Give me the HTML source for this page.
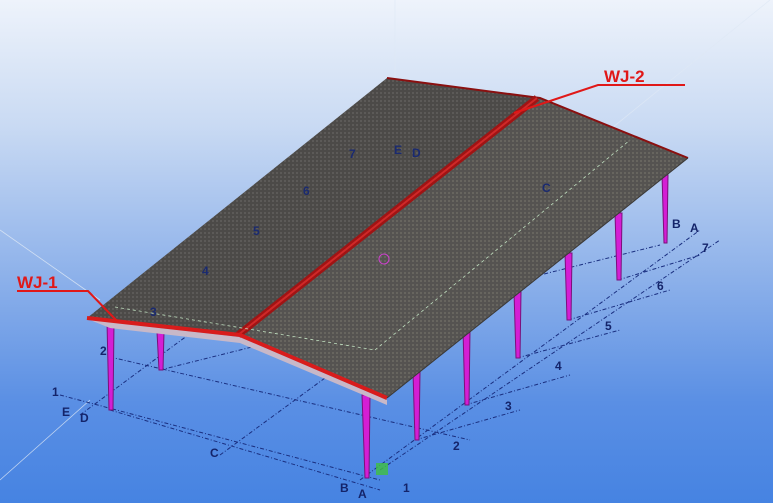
<!DOCTYPE html>
<html><head><style>
html,body{margin:0;padding:0;width:773px;height:503px;overflow:hidden}
body{background:linear-gradient(180deg,#eef3fb 0%,#c9daf3 25%,#8db1ea 55%,#5a8fe4 80%,#4683e2 100%)}
svg{position:absolute;left:0;top:0}
text{font-family:"Liberation Sans",sans-serif;font-weight:bold}
</style></head><body>
<svg width="773" height="503" viewBox="0 0 773 503">
<defs>
<pattern id="t" width="4" height="4" patternUnits="userSpaceOnUse">
<rect width="4" height="4" fill="#4c4a48"/><rect width="2" height="2" fill="#5c5a58"/></pattern>
<pattern id="t2" width="4" height="4" patternUnits="userSpaceOnUse">
<rect width="4" height="4" fill="#555351"/><rect width="2" height="2" fill="#67655f"/></pattern>
</defs>
<g stroke="#dfe8f5" stroke-width="0.8" fill="none" opacity="0.8">
<line x1="395" y1="0" x2="395" y2="78"/>
<line x1="0" y1="230" x2="100" y2="300"/>
<line x1="560" y1="170" x2="770" y2="0"/>
<line x1="0" y1="480" x2="90" y2="400"/>
</g>
<g stroke="#1a2f80" stroke-width="1" stroke-dasharray="4,2,1,2" fill="none">
<line x1="60" y1="395" x2="380" y2="480"/>
<line x1="110" y1="357" x2="470" y2="440"/>
<line x1="160" y1="370" x2="660" y2="245"/>
<line x1="110" y1="410" x2="380" y2="490"/>
<line x1="80" y1="415" x2="330" y2="230"/>
<line x1="220" y1="455" x2="520" y2="235"/>
<line x1="360" y1="480" x2="700" y2="230"/>
<line x1="380" y1="470" x2="720" y2="240"/>
<line x1="415" y1="440" x2="520" y2="410"/>
<line x1="465" y1="405" x2="570" y2="375"/>
<line x1="517" y1="358" x2="620" y2="330"/>
<line x1="568" y1="320" x2="670" y2="290"/>
<line x1="618" y1="280" x2="700" y2="255"/>
</g>
<g fill="#d41ed4" stroke="#7a107a" stroke-width="1">
<polygon points="107,322 114,322 113,410 109,410"/>
<polygon points="157,332 164,332 163,370 159,370"/>
<polygon points="362,395 370,395 369,478 365,478"/>
<polygon points="413,372 420,372 419,440 415,440"/>
<polygon points="463,330 470,330 469,405 465,405"/>
<polygon points="514,292 521,292 520,358 516,358"/>
<polygon points="565,253 572,253 571,320 567,320"/>
<polygon points="615,213 622,213 621,280 617,280"/>
<polygon points="662,175 668,175 667,243 664,243"/>
</g>
<polygon points="90,320 240,337 387,400 387,405 240,343 110,328" fill="#c8b8c8"/>
<polygon points="387,78 540,98 240,335 87,318" fill="url(#t)"/>
<polygon points="540,98 688,158 387,398 240,335" fill="url(#t2)"/>
<polyline points="387,78 540,98 688,158" fill="none" stroke="#8a1010" stroke-width="2"/>
<line x1="537" y1="98" x2="238" y2="335" stroke="#a01414" stroke-width="7"/>
<line x1="537" y1="98" x2="238" y2="335" stroke="#d02828" stroke-width="2"/>
<polyline points="87,318 240,335 387,398" fill="none" stroke="#d81c1c" stroke-width="4"/>
<line x1="688" y1="158" x2="387" y2="398" stroke="#3a3836" stroke-width="1"/>
<line x1="115" y1="307" x2="375" y2="350" stroke="#c0e0c0" stroke-width="0.8" stroke-dasharray="3,3"/>
<line x1="375" y1="350" x2="630" y2="140" stroke="#c0e0c0" stroke-width="0.8" stroke-dasharray="3,3"/>
<g fill="#1a2a70" font-size="12">
<text x="150" y="316">3</text><text x="202" y="275">4</text><text x="253" y="235">5</text>
<text x="303" y="195">6</text><text x="349" y="158">7</text><text x="394" y="154">E</text><text x="412" y="157">D</text>
<text x="542" y="192">C</text>
</g>
<g fill="#14246a" font-size="12">
<text x="100" y="355">2</text><text x="52" y="396">1</text><text x="62" y="416">E</text><text x="80" y="422">D</text>
<text x="210" y="457">C</text><text x="340" y="492">B</text><text x="358" y="498">A</text><text x="403" y="492">1</text>
<text x="453" y="450">2</text><text x="505" y="410">3</text><text x="555" y="370">4</text><text x="605" y="330">5</text>
<text x="657" y="290">6</text><text x="702" y="252">7</text><text x="672" y="228">B</text><text x="690" y="232">A</text>
</g>
<polyline points="17,291 88,291 118,322" fill="none" stroke="#e01818" stroke-width="2"/>
<text x="17" y="288" fill="#e01818" font-size="17">WJ-1</text>
<polyline points="685,85 598,85 514,113" fill="none" stroke="#e01818" stroke-width="2"/>
<text x="604" y="82" fill="#e01818" font-size="17">WJ-2</text>
<circle cx="384" cy="259" r="5" fill="none" stroke="#d040d0" stroke-width="1"/>
<rect x="376" y="463" width="12" height="12" fill="#40c040" opacity="0.8"/>
</svg>
</body></html>
